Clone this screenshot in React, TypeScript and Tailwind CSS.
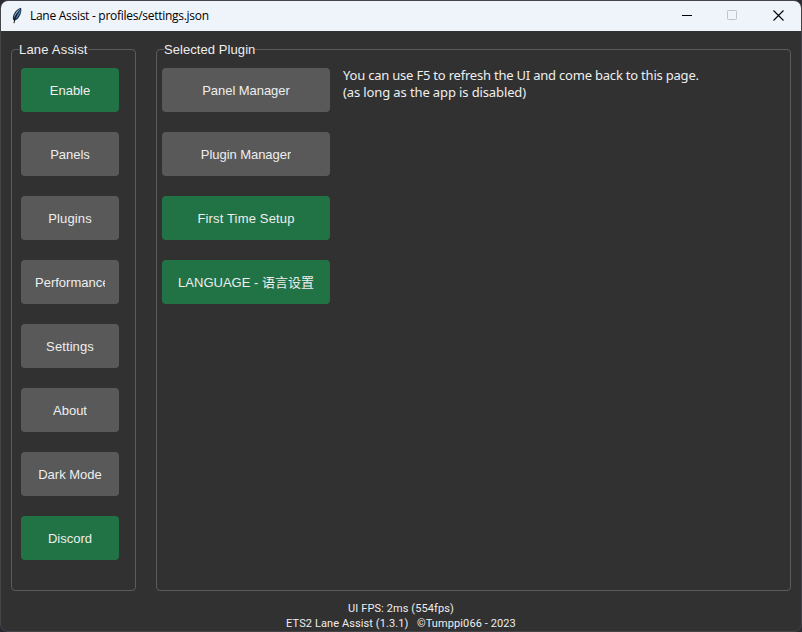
import type { ReactNode } from "react";

type Item = { label: string; accent?: boolean; tracking?: string };

const navItems: Item[] = [
  { label: "Enable", accent: true },
  { label: "Panels" },
  { label: "Plugins", tracking: "tracking-[0.15px]" },
  { label: "Performance" },
  { label: "Settings", tracking: "tracking-[0.1px]" },
  { label: "About" },
  { label: "Dark Mode" },
  { label: "Discord", accent: true },
];

const pluginItems: Item[] = [
  { label: "Panel Manager", tracking: "tracking-[-0.05px]" },
  { label: "Plugin Manager", tracking: "tracking-[-0.05px]" },
  { label: "First Time Setup", accent: true, tracking: "tracking-[0.16px]" },
  { label: "LANGUAGE - 语言设置", accent: true },
];

function ThemedButton({ label, accent, tracking = "", wide }: Item & { wide?: boolean }) {
  return (
    <button
      className={`flex h-11 items-center justify-center rounded-[4px] pt-[2px] text-[13px] text-[#eeeeee] ${
        wide ? "w-[168px]" : "w-[98px]"
      } ${accent ? "bg-[#217346]" : "bg-[#595959]"}`}
    >
      <span
        className={`overflow-hidden whitespace-nowrap ${tracking} ${wide ? "" : "max-w-[70px]"}`}
      >
        {label}
      </span>
    </button>
  );
}

function Frame({
  title,
  className,
  legendClassName,
  children,
}: {
  title: string;
  className: string;
  legendClassName: string;
  children: ReactNode;
}) {
  return (
    <fieldset
      className={`h-[550px] min-w-0 rounded-[4px] border border-[#5c5c5c] ${className}`}
    >
      <legend
        className={`h-[17px] whitespace-nowrap text-[13px] leading-[17px] text-[#eeeeee] ${legendClassName}`}
      >
        {title}
      </legend>
      {children}
    </fieldset>
  );
}

function Feather() {
  return (
    <svg className="-mt-[2px] ml-[10px] h-[17px] w-3" viewBox="0 0 12 17">
      <path
        d="M10 .8C7.500 1.300 4.600 3.800 3 6.800 2 8.700 1.500 11 2.100 12.800L3.300 13.800C5.800 12.800 8 10.800 9.100 8.200 10.200 5.700 10.800 3 10 .8Z"
        fill="#1d3146"
      />
      <path d="M9.300 1.700C6.500 3 3.600 6.600 2.900 10.800 4.600 7.600 6.900 5 9.300 1.700Z" fill="#93b8dc" />
      <path d="M9.500 2.400C7.600 5.400 5.600 8.200 4 12C6.800 10.300 9.500 7 9.500 2.400Z" fill="#4a80b8" />
      <path d="M7.300 5.500C5 8.700 3.700 11.500 3 16.200" fill="none" stroke="#111820" strokeWidth="1" />
    </svg>
  );
}

function TitleBar() {
  return (
    <header className="flex h-[30px] shrink-0 items-center bg-[#eff4fb] text-black">
      <Feather />
      <h1 className="ml-[7px] grow whitespace-nowrap font-['Open_Sans','Noto_Sans',sans-serif] text-[12px] leading-4 tracking-[-0.28px]">
        Lane Assist - profiles/settings.json
      </h1>
      <div className="flex items-center pr-[17px] pb-[1px]">
        <svg className="h-[11px] w-[11px]" viewBox="0 0 11 11">
          <path d="M0 5.500h10" stroke="#000" />
        </svg>
        <svg className="ml-[34px] h-[11px] w-[11px]" viewBox="0 0 11 11">
          <rect x=".5" y=".5" width="9" height="9" rx=".8" fill="none" stroke="#bfc3ca" />
        </svg>
        <svg className="ml-[35px] h-[11px] w-[11px]" viewBox="0 0 11 11">
          <path d="M.5 .5l10 10M10.500 .5l-10 10" stroke="#000" strokeWidth="1.100" />
        </svg>
      </div>
    </header>
  );
}

export default function App() {
  return (
    <div className="h-[632px] w-[802px] bg-[#2b2a32]">
      <div className="flex h-full flex-col overflow-hidden rounded-[8px] border border-[#454549] bg-[#313131] font-['Liberation_Sans','Noto_Sans_CJK_SC',sans-serif]">
        <TitleBar />
        <main className="flex gap-5 pt-[10px] pl-[10px]">
          <Frame title="Lane Assist" className="w-[125px] pl-[7px]" legendClassName="tracking-[0.2px]">
            <nav className="flex flex-col gap-5 pt-[10px] pl-[2px]">
              {navItems.map((item) => (
                <ThemedButton key={item.label} {...item} />
              ))}
            </nav>
          </Frame>
          <Frame title="Selected Plugin" className="w-[635px] pl-[7px]" legendClassName="tracking-[0.07px]">
            <div className="-ml-[2px] flex items-start pt-[10px]">
              <div className="flex flex-col gap-5">
                {pluginItems.map((item) => (
                  <ThemedButton key={item.label} {...item} wide />
                ))}
              </div>
              <p className="-mt-px ml-[13px] whitespace-nowrap font-['Noto_Sans',sans-serif] text-[13px] leading-[17px] tracking-[-0.21px] text-[#eeeeee]">
                You can use F5 to refresh the UI and come back to this page.
                <br />
                <span className="tracking-[-0.12px]">(as long as the app is disabled)</span>
              </p>
            </div>
          </Frame>
        </main>
        <footer className="flex flex-col items-center pt-[10px] font-[Roboto,sans-serif] text-[11px] leading-[15px] tracking-[0.1px] text-[#eeeeee]">
          <p>UI FPS: 2ms (554fps)</p>
          <p className="whitespace-pre">ETS2 Lane Assist (1.3.1)   ©Tumppi066 - 2023</p>
        </footer>
      </div>
    </div>
  );
}
